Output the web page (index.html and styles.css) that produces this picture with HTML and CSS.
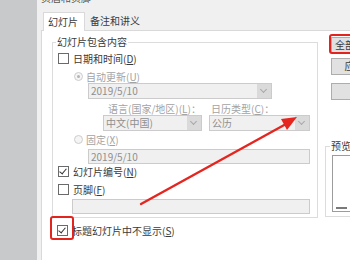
FILE: index.html
```html
<!DOCTYPE html>
<html lang="zh-CN">
<head>
    <meta charset="UTF-8">
    <title>页眉和页脚</title>
    <link rel="stylesheet" href="styles.css">
</head>
<body>
<div class="screen">
    <div class="side"></div>
    <div class="dialog">
        <div class="title"><span>页眉和页脚</span></div>
        <div class="tabs">
            <div class="tab active">幻灯片</div>
            <div class="tab">备注和讲义</div>
        </div>
        <div class="panel">
            <div class="left">
                <fieldset class="group">
                    <legend>幻灯片包含内容</legend>
                    <div class="row"><span class="box"></span>日期和时间(<u>D</u>)</div>
                    <div class="row radio-row off"><span class="radio on"></span>自动更新(<u>U</u>)</div>
                    <div class="select wide"><span class="val">2019/5/10</span><span class="drop"></span></div>
                    <div class="labels off">
                        <span class="lab lang">语言(国家/地区)(<u>L</u>)：</span>
                        <span class="lab cal">日历类型(<u>C</u>)：</span>
                    </div>
                    <div class="selects">
                        <div class="select lang"><span class="val">中文(中国)</span><span class="drop"></span></div>
                        <div class="select cal"><span class="val">公历</span><span class="drop"></span></div>
                    </div>
                    <div class="row radio-row off fixed"><span class="radio"></span>固定(<u>X</u>)</div>
                    <div class="input date"><span class="val">2019/5/10</span></div>
                    <div class="row num"><span class="box checked"></span>幻灯片编号(<u>N</u>)</div>
                    <div class="row foot"><span class="box"></span>页脚(<u>F</u>)</div>
                    <div class="input footer"></div>
                </fieldset>
                <div class="row bottom"><span class="box checked marked"></span>标题幻灯片中不显示(<u>S</u>)</div>
            </div>
            <div class="right">
                <div class="btn first marked">全部应用(<u>Y</u>)</div>
                <div class="btn second">应用(<u>A</u>)</div>
                <div class="btn third">取消</div>
                <fieldset class="preview">
                    <legend>预览</legend>
                    <div class="thumb"><span class="bar"></span></div>
                </fieldset>
            </div>
        </div>
    </div>
    <svg class="arrow" width="350" height="260" viewBox="0 0 350 260">
        <line x1="141" y1="204" x2="286" y2="124" stroke="#e5251f" stroke-width="2.4" stroke-linecap="round"/>
        <polygon points="297,117 287,130 281,119" fill="#e5251f"/>
    </svg>
</div>
</body>
</html>
```

FILE: styles.css
```css
/* Grund */
* {
    box-sizing: border-box;
}
body {
    margin: 0;
    font-family: "Noto Sans CJK SC", "Noto Sans", sans-serif;
    font-size: 10px;
    color: #3a3a3a;
    background-color: #c8c9cb;
}
u {
    text-decoration: underline;
}
.screen {
    position: relative;
    display: flex;
    width: 350px;
    height: 260px;
    overflow: hidden;
}
.side {
    width: 37px;
    flex: none;
    background-color: #c8c9cb;
}
.dialog {
    width: 313px;
    flex: none;
    background-color: #f0f0f0;
    padding-left: 4px;
    overflow: hidden;
}
.title {
    height: 9px;
    overflow: hidden;
    color: #555;
}
.title span {
    display: block;
    margin-top: -8px;
    line-height: 12px;
}

/* Flikar */
.tabs {
    display: flex;
    align-items: flex-end;
    height: 21px;
    padding-left: 2px;
}
.tab {
    height: 18px;
    line-height: 18px;
    padding: 0 6px 0 5px;
}
.tab.active {
    position: relative;
    z-index: 1;
    height: 19px;
    margin-bottom: -1px;
    background-color: #fff;
    border: 1px solid #d9d9d9;
    border-bottom: none;
    padding-left: 4px;
}
.panel {
    display: flex;
    align-items: flex-start;
    width: 400px;
    height: 240px;
    background-color: #fff;
    border: 1px solid #d9d9d9;
    padding: 5px 0 0 10px;
}

/* Gruppen */
fieldset {
    margin: 0;
    border: 1px solid #dcdcdc;
    min-width: 0;
}
legend {
    padding: 0 1px;
    margin-left: -2px;
    line-height: 12px;
}
.group {
    width: 266px;
    padding: 4px 7px 3px 5px;
}
.row {
    display: flex;
    align-items: center;
    height: 13px;
    white-space: nowrap;
}
.off {
    color: #a3a3a3;
}
.box {
    position: relative;
    width: 11px;
    height: 11px;
    margin-right: 4px;
    border: 1px solid #6a6a6a;
    background-color: #fff;
    flex: none;
}
.box.checked::before {
    content: "";
    position: absolute;
    left: 2px;
    top: 0px;
    width: 3px;
    height: 6px;
    border-right: 1.3px solid #333;
    border-bottom: 1.3px solid #333;
    transform: rotate(40deg);
}
.box.marked::after {
    content: "";
    position: absolute;
    left: -8px;
    top: -10px;
    right: -7px;
    bottom: -5px;
    border: 2.5px solid #e2241f;
    border-radius: 3px;
}
.radio-row {
    margin-top: 5px;
    padding-left: 16px;
}
.radio-row.fixed {
    margin-top: 2px;
    height: 12px;
}
.radio {
    position: relative;
    width: 9px;
    height: 9px;
    margin-right: 3px;
    border: 1px solid #cdcdcd;
    border-radius: 50%;
    background-color: #f5f5f5;
    flex: none;
}
.radio.on::after {
    content: "";
    position: absolute;
    left: 2px;
    top: 2px;
    width: 3px;
    height: 3px;
    border-radius: 50%;
    background-color: #b4b4b4;
}

/* Falt */
.select, .input {
    display: flex;
    height: 16px;
    border: 1px solid #cbcbcb;
    background-color: #f0f0f0;
    color: #8f8f8f;
    line-height: 14px;
}
.val {
    flex: 1;
    padding-left: 2px;
    white-space: nowrap;
}
.drop {
    position: relative;
    width: 14px;
    flex: none;
    background-color: #dadada;
}
.drop::after {
    content: "";
    position: absolute;
    left: 4px;
    top: 3px;
    width: 4px;
    height: 4px;
    border-right: 1px solid #a8a8a8;
    border-bottom: 1px solid #a8a8a8;
    transform: rotate(45deg);
}
.select.wide {
    width: 184px;
    margin-left: 30px;
}
.labels {
    display: flex;
    height: 12px;
    margin-top: 4px;
    margin-left: 45px;
    line-height: 12px;
    white-space: nowrap;
}
.lab.lang {
    width: 106px;
    padding-left: 5px;
}
.lab.cal {
    padding-left: 2px;
}
.selects {
    display: flex;
    gap: 7px;
    margin-left: 45px;
}
.select.lang {
    width: 99px;
}
.select.cal {
    width: 101px;
}
.input.date {
    width: 222px;
    height: 15px;
    margin-top: 4px;
    margin-left: 30px;
    line-height: 13px;
}
.row.num {
    margin-top: 1px;
}
.row.foot {
    margin-top: 5px;
}
.input.footer {
    width: 238px;
    height: 15px;
    margin-top: 3px;
    margin-left: 14px;
}
.row.bottom {
    margin-top: 6px;
    padding-left: 5px;
}

/* Knappar och förhandsvisning */
.right {
    display: flex;
    flex-direction: column;
    margin-left: 7px;
}
.btn {
    position: relative;
    width: 60px;
    height: 16px;
    margin-left: 6px;
    background-color: #e1e1e1;
    border: 1px solid #adadad;
    text-align: center;
    line-height: 14px;
    white-space: nowrap;
}
.btn.first {
    margin-top: 1px;
}
.btn.second {
    margin-top: 5px;
    height: 17px;
}
.btn.third {
    margin-top: 8px;
    height: 17px;
}
.btn.marked::after {
    content: "";
    position: absolute;
    left: -3px;
    top: -4px;
    right: -3px;
    bottom: -2px;
    border: 2.5px solid #e2241f;
    border-radius: 3px;
}
.preview {
    width: 60px;
    margin-top: 40px;
    padding: 3px 0 4px 6px;
}
.thumb {
    display: flex;
    align-items: flex-end;
    width: 50px;
    height: 57px;
    padding: 0 0 2px 3px;
    border: 1px solid #9c9c9c;
    background-color: #fff;
}
.bar {
    width: 11px;
    height: 2px;
    background-color: #7a7a7a;
}
.arrow {
    position: absolute;
    left: 0;
    top: 0;
    pointer-events: none;
}
```
